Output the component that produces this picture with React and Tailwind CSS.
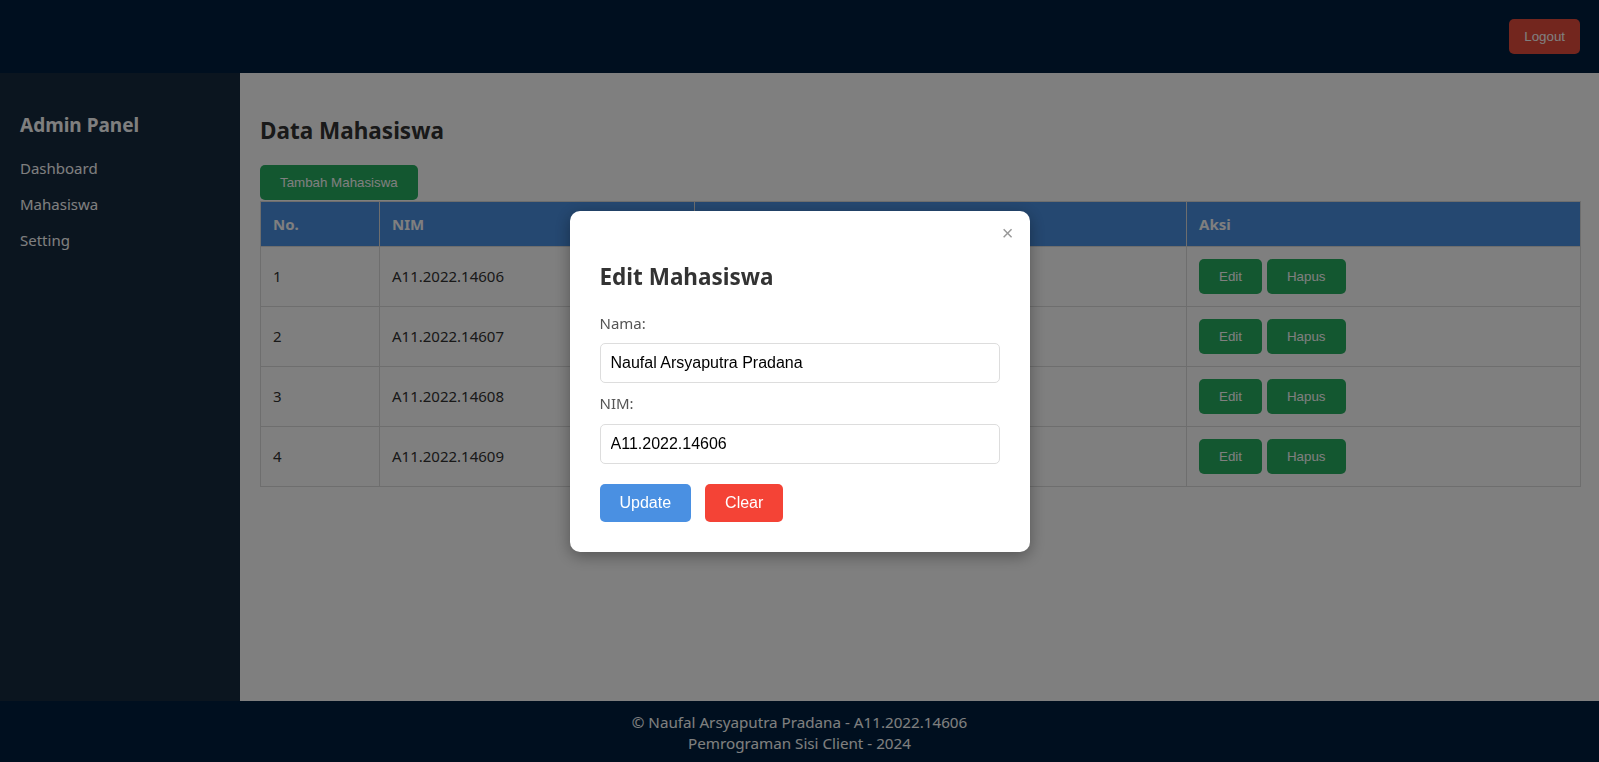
const students = [
  { nim: "A11.2022.14606", nama: "Naufal Arsyaputra Pradana" },
  { nim: "A11.2022.14607", nama: "Budi Santoso" },
  { nim: "A11.2022.14608", nama: "Siti Aminah" },
  { nim: "A11.2022.14609", nama: "Rizky Ramadhan" },
];

const sans = "font-['Segoe_UI','Noto_Sans',sans-serif]";
const arial = "font-['Liberation_Sans',Arial,sans-serif]";

const App = () => {
  return (
    <div className={`h-screen w-screen flex flex-col ${sans} relative`}>
      <header className="h-[73px] w-full bg-[#001f3f] flex items-center justify-end pr-[19px] shrink-0">
        <button
          className={`h-[35px] px-[15px] bg-[#e74c3c] text-white text-[13.333px] rounded-[5px] ${arial}`}
        >
          Logout
        </button>
      </header>

      <div className="flex-1 flex min-h-0">
        <aside className="w-[240px] shrink-0 bg-[#172a3f] px-[20px] pt-[39px]">
          <h3 className="text-white text-[19px] font-bold leading-[27px] mb-[11px]">
            Admin Panel
          </h3>
          <ul className="flex flex-col text-white text-[15px]">
            <li className="h-[36px] flex items-center">Dashboard</li>
            <li className="h-[36px] flex items-center">Mahasiswa</li>
            <li className="h-[36px] flex items-center">Setting</li>
          </ul>
        </aside>

        <main className="flex-1 bg-white p-[20px]">
          <h2 className="text-[#333] text-[22.5px] font-bold leading-[32px] mt-[22px] mb-[18px]">
            Data Mahasiswa
          </h2>
          <button
            className={`h-[35px] px-[20px] bg-[#27ae60] text-white text-[13.333px] rounded-[5px] ${arial}`}
          >
            Tambah Mahasiswa
          </button>
          <table className="w-[1320px] table-fixed border-collapse text-[15px] text-[#333] mt-[1px]">
            <colgroup>
              <col className="w-[119px]" />
              <col className="w-[315px]" />
              <col className="w-[492px]" />
              <col className="w-[394px]" />
            </colgroup>
            <thead>
              <tr className="bg-[#4a90e2] text-white">
                <th className="border border-[#ddd] p-[12px] text-left font-bold leading-[20px]">No.</th>
                <th className="border border-[#ddd] p-[12px] text-left font-bold leading-[20px]">NIM</th>
                <th className="border border-[#ddd] p-[12px] text-left font-bold leading-[20px]">Nama</th>
                <th className="border border-[#ddd] p-[12px] text-left font-bold leading-[20px]">Aksi</th>
              </tr>
            </thead>
            <tbody>
              {students.map((s, i) => (
                <tr key={s.nim} className="h-[60px]">
                  <td className="border border-[#ddd] px-[12px] align-middle">{i + 1}</td>
                  <td className="border border-[#ddd] px-[12px] align-middle">{s.nim}</td>
                  <td className="border border-[#ddd] px-[12px] align-middle">{s.nama}</td>
                  <td className="border border-[#ddd] px-[12px] align-middle">
                    <div className="flex gap-[5px]">
                      <button
                        className={`h-[35px] px-[20px] bg-[#27ae60] text-white text-[13.333px] rounded-[5px] ${arial}`}
                      >
                        Edit
                      </button>
                      <button
                        className={`h-[35px] px-[20px] bg-[#27ae60] text-white text-[13.333px] rounded-[5px] ${arial}`}
                      >
                        Hapus
                      </button>
                    </div>
                  </td>
                </tr>
              ))}
            </tbody>
          </table>
        </main>
      </div>

      <footer className="h-[61px] w-full bg-[#001f3f] flex flex-col items-center justify-center pt-[2px] text-white text-[15.2px] leading-[21px] shrink-0">
        <p>© Naufal Arsyaputra Pradana - A11.2022.14606</p>
        <p>Pemrograman Sisi Client - 2024</p>
      </footer>

      {/* modal */}
      <div className="fixed inset-0 bg-[rgba(0,0,0,0.5)] flex items-center justify-center">
        <div className="relative w-[460px] bg-white rounded-[10px] p-[30px] shadow-[0_4px_16px_rgba(0,0,0,0.35)]">
          <span className={`absolute top-[12px] right-[16px] text-[#999] text-[20px] leading-[20px] ${arial}`}>
            ×
          </span>
          <h2 className="text-[#333] text-[22.5px] font-bold leading-[32px] mt-[20px] mb-[20px]">
            Edit Mahasiswa
          </h2>
          <label className="block text-[#555] text-[15px] leading-[21px] mb-[9px]">Nama:</label>
          <input
            defaultValue="Naufal Arsyaputra Pradana"
            className={`block w-full h-[40px] px-[10px] border border-[#ddd] rounded-[5px] text-[16px] text-black outline-none ${arial}`}
          />
          <label className="block text-[#555] text-[15px] leading-[21px] mt-[10px] mb-[10px]">NIM:</label>
          <input
            defaultValue="A11.2022.14606"
            className={`block w-full h-[40px] px-[10px] border border-[#ddd] rounded-[5px] text-[16px] text-black outline-none ${arial}`}
          />
          <div className="flex gap-[14px] mt-[20px]">
            <button className={`h-[38px] px-[20px] bg-[#4a90e2] text-white text-[16px] rounded-[5px] ${arial}`}>
              Update
            </button>
            <button className={`h-[38px] px-[20px] bg-[#f44336] text-white text-[16px] rounded-[5px] ${arial}`}>
              Clear
            </button>
          </div>
        </div>
      </div>
    </div>
  );
};

export default App;
